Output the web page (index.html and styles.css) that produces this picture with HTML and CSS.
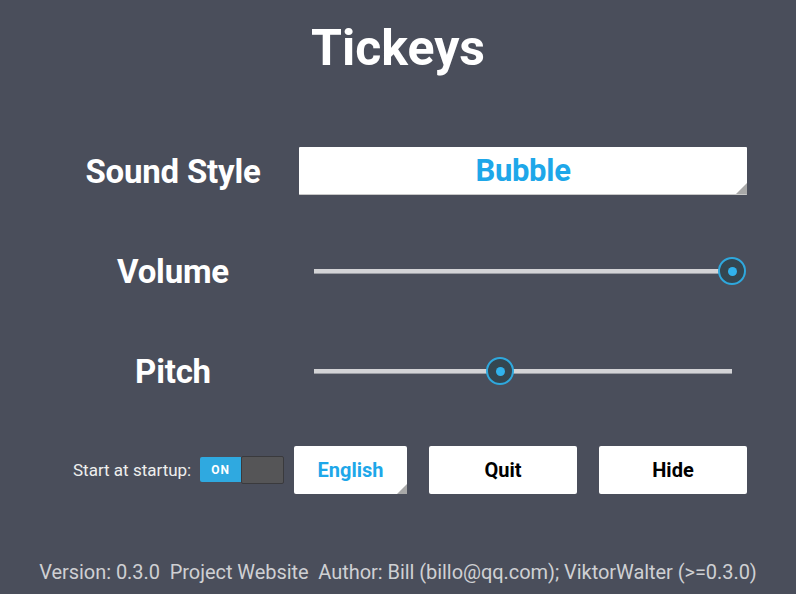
FILE: index.html
```html
<!DOCTYPE html>
<html>
<head>
<meta charset="utf-8">
<link rel="stylesheet" href="styles.css">
</head>
<body>
<div class="app">
  <h1 class="title">Tickeys</h1>
  <div class="row">
    <div class="label">Sound Style</div>
    <div class="control">
      <div class="dropdown big">Bubble<span class="corner"></span></div>
    </div>
  </div>
  <div class="row">
    <div class="label">Volume</div>
    <div class="control">
      <div class="slider">
        <div class="track"></div>
        <div class="thumb" style="left: 100%"></div>
      </div>
    </div>
  </div>
  <div class="row">
    <div class="label">Pitch</div>
    <div class="control">
      <div class="slider">
        <div class="track"></div>
        <div class="thumb" style="left: 44.5%"></div>
      </div>
    </div>
  </div>
  <div class="bottom">
    <span class="startup">Start at startup:</span>
    <div class="toggle"><span class="on">ON</span><span class="off"></span></div>
    <div class="btn lang">English<span class="corner small"></span></div>
    <div class="btn">Quit</div>
    <div class="btn">Hide</div>
  </div>
  <div class="footer">Version: 0.3.0&nbsp; Project Website&nbsp; Author: Bill (billo@qq.com); ViktorWalter (&gt;=0.3.0)</div>
</div>
</body>
</html>
```
FILE: styles.css
```css
html, body {
  margin: 0;
  padding: 0;
  background: #4a4e5b;
}
body {
  width: 796px;
  height: 594px;
  overflow: hidden;
  font-family: Roboto, "Liberation Sans", sans-serif;
}
.app {
  display: flex;
  flex-direction: column;
  height: 594px;
}
.title {
  margin: 0 0 26px;
  height: 95px;
  display: flex;
  align-items: center;
  justify-content: center;
  color: #fff;
  font-size: 50px;
  font-weight: 700;
}
.row {
  height: 100px;
  display: flex;
  align-items: center;
}
.label {
  width: 346px;
  text-align: center;
  color: #fff;
  font-size: 33px;
  font-weight: 700;
  letter-spacing: -0.2px;
}
.control {
  width: 448px;
  margin-left: -47px;
  display: flex;
  align-items: center;
}
.dropdown {
  position: relative;
  width: 448px;
  height: 48px;
  background: #fff;
  border-bottom: 1px solid #c8c8c8;
  box-sizing: border-box;
  display: flex;
  align-items: center;
  justify-content: center;
  color: #1ea7e9;
  font-size: 31px;
  font-weight: 700;
  letter-spacing: -0.3px;
  border-radius: 1px;
}
.corner {
  position: absolute;
  right: 0;
  bottom: 0;
  width: 0;
  height: 0;
  border-style: solid;
  border-width: 0 0 11px 11px;
  border-color: transparent transparent #a8a8a8 transparent;
}
.slider {
  position: relative;
  width: 418px;
  margin-left: 15px;
  height: 30px;
}
.track {
  position: absolute;
  left: 0;
  right: 0;
  top: 13px;
  height: 5px;
  background: #d3d3d6;
  border-bottom: 1px solid #9a9ca3;
  box-sizing: border-box;
}
.thumb {
  position: absolute;
  top: 1px;
  width: 28px;
  height: 28px;
  margin-left: -14px;
  box-sizing: border-box;
  border: 2px solid #2fa8dd;
  border-radius: 50%;
  background: #344650;
}
.thumb::after {
  content: "";
  position: absolute;
  left: 7.5px;
  top: 7.5px;
  width: 9px;
  height: 9px;
  border-radius: 50%;
  background: #31b2ec;
}
.bottom {
  height: 100px;
  box-sizing: border-box;
  padding-bottom: 2px;
  display: flex;
  align-items: center;
  padding-left: 73px;
}
.startup {
  color: #eee;
  font-size: 17px;
  width: 127px;
}
.toggle {
  display: flex;
  width: 84px;
  height: 28px;
  margin-right: 10px;
}
.toggle .on {
  width: 41px;
  background: #2fa9e0;
  color: #fff;
  font-size: 12px;
  font-weight: 700;
  letter-spacing: 1px;
  display: flex;
  align-items: center;
  justify-content: center;
  border-radius: 2px 0 0 2px;
  margin-top: 1px;
  margin-bottom: 2px;
}
.toggle .off {
  flex: 1;
  background: #555557;
  border: 1px solid #3a3a3d;
  border-radius: 2px;
}
.btn {
  position: relative;
  width: 148px;
  height: 48px;
  background: #fff;
  color: #000;
  font-size: 20px;
  font-weight: 700;
  display: flex;
  align-items: center;
  justify-content: center;
  margin-right: 22px;
  border-radius: 2px;
}
.btn.lang {
  width: 113px;
  color: #1ea7e9;
}
.corner.small {
  border-width: 0 0 10px 10px;
}
.footer {
  flex: 1;
  display: flex;
  align-items: center;
  justify-content: center;
  color: #cfd0d3;
  font-size: 20px;
  letter-spacing: -0.05px;
  padding-top: 28px;
}
```
